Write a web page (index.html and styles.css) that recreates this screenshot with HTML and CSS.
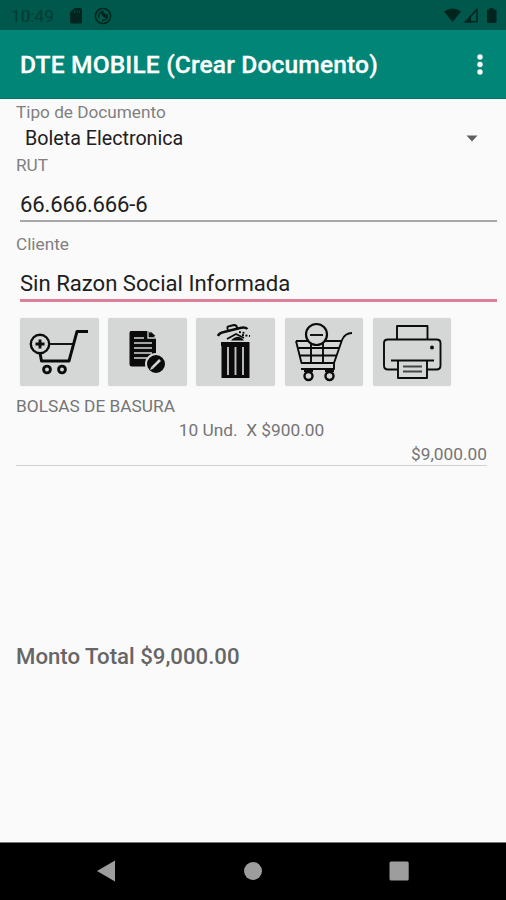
FILE: index.html
```html
<!DOCTYPE html>
<html lang="es">
<head>
<meta charset="utf-8">
<title>DTE MOBILE</title>
<link rel="stylesheet" href="styles.css">
</head>
<body>
<div class="screen">
  <div class="status">
    <span class="clock">10:49</span>
    <svg class="sd" width="12" height="16" viewBox="0 0 12 16"><path d="M4.500 0H10.500Q12 0 12 1.500V14Q12 15.500 10.500 15.500H1.500Q0 15.500 0 14V4.500Z"/><path class="notch" d="M4.500 2.500V5M7 2.500V5M9.500 2.500V5"/></svg>
    <svg class="sync" width="18" height="18" viewBox="0 0 18 18"><circle class="ring" cx="9" cy="9" r="7.600"/><path class="ring" d="M5 11A4.500 4.500 0 0 1 10 4.700M13 7A4.500 4.500 0 0 1 8 13.300"/><path d="M5.500 5.500L9 5 13 8.500 13 11.500 9.500 10 7.500 7.500Z"/></svg>
    <svg class="signals" width="54" height="18" viewBox="0 0 54 18"><path d="M0 4.500Q8.500-1.500 17 4.500L8.500 15Z"/><path class="ring" d="M21.500 14.700L33 2.500V14.700Z"/><path d="M20.500 15.500L27 8.500V15.500Z"/><path d="M45.500 1H49.500V2.500H51Q52.500 2.500 52.500 3.500V15Q52.500 16 51.500 16H44Q43 16 43 15V3.500Q43 2.500 44 2.500H45.500Z"/></svg>
  </div>
  <header class="appbar">
    <h1>DTE MOBILE (Crear Documento)</h1>
    <svg width="8" height="22" viewBox="0 0 8 22"><circle cx="4" cy="4" r="2.700"/><circle cx="4" cy="11.500" r="2.700"/><circle cx="4" cy="19" r="2.700"/></svg>
  </header>
  <main>
    <div class="label tipo">Tipo de Documento</div>
    <div class="spinner"><span>Boleta Electronica</span><svg width="12" height="7" viewBox="0 0 12 7"><path d="M0.500 0.500H11.500L6 6.500Z"/></svg></div>
    <div class="label rut">RUT</div>
    <div class="field"><span class="rutvalue">66.666.666-6</span></div>
    <div class="label cliente">Cliente</div>
    <div class="field active"><span class="name">Sin Razon Social Informada</span></div>
    <div class="tools">
      <button aria-label="Agregar"><svg viewBox="0 0 78 68"><g class="line"><path class="w3" d="M68 13.500H57L49 43H21.500L20 35"/><path class="w2" d="M29 26H53"/><circle class="w25" cx="20" cy="26" r="9.200"/><path class="w3" d="M20 21.500V30.500M15.500 26H24.500"/><circle class="w3" cx="27" cy="51.500" r="3.400"/><circle class="w3" cx="42" cy="51.500" r="3.400"/></g></svg></button>
      <button aria-label="Editar"><svg viewBox="0 0 78 68"><path d="M23 13H40L48 20V46Q48 48.500 45.500 48.500H24Q21.500 48.500 21.500 46V15Q21.500 13 23 13Z"/><path class="cut" d="M40 13V20H48M26 20H36M26 25H44M26 30H44M26 35H44M26 40H40"/><path d="M42.500 13.500L47.500 18H42.500Z"/><circle class="disc" cx="48" cy="46" r="10"/><path class="pen" d="M44.300 49.700L52 42"/><path class="nib" d="M42 52L43.300 48.700 45.300 50.700Z"/></svg></button>
      <button aria-label="Vaciar"><svg viewBox="0 0 78 68"><path d="M25 24H53.500V60H25.500V28H25Z"/><path class="bars" d="M32 29V57M39.500 29V57M47 29V57"/><g class="line"><path class="w25" d="M22 18Q23 15 28 14L44 10Q49 8.500 51.500 11"/><path class="w2" d="M32 12Q30 8 34 8L38 7Q41 7 41 10M31 21L40 16 48 20"/><path class="w2 debris" d="M43 14L49 15M46 17L54 18"/></g><path d="M35 22.500Q42 15 48 22.500Z"/></svg></button>
      <button aria-label="Quitar"><svg viewBox="0 0 78 68"><g class="line"><path class="w2" d="M67 15Q60 15 57 22L49 45V51H16M11 23H56M11 23L16.500 45H49M12.500 30H54M14.500 37.500H52M26 23V45M38 23V45"/><circle class="badge" cx="31.500" cy="16.500" r="10.500"/><path class="w2" d="M25 17H38"/><circle class="w25" cx="23.500" cy="58" r="4"/><circle class="w25" cx="44.500" cy="58" r="4"/><path class="w2" d="M19 53H28M40 53H49"/></g></svg></button>
      <button aria-label="Imprimir"><svg viewBox="0 0 78 68"><g class="line"><path class="w2" d="M24 21V8H54.500V21M24 51.500H15Q11 51.500 11 47.500V25Q11 21.500 15 21.500H63.500Q67.500 21.500 67.500 25V47.500Q67.500 51.500 63.500 51.500H54.500M18 42.500H61M25 42.500V60H54V42.500"/><path class="w2 text" d="M30 48.500H49M30 53.500H49"/></g><circle cx="59" cy="29.500" r="2"/></svg></button>
    </div>
    <div class="item">
      <div class="product">BOLSAS DE BASURA</div>
      <div class="quantity">10 Und.&nbsp; X $900.00</div>
      <div class="amount">$9,000.00</div>
    </div>
    <div class="total">Monto Total $9,000.00</div>
  </main>
  <nav>
    <svg width="18" height="22" viewBox="0 0 18 22"><path d="M0 11L18 0.500V21.500Z"/></svg>
    <svg width="19" height="20" viewBox="0 0 19 20"><circle cx="10" cy="10" r="9"/></svg>
    <svg width="20" height="20" viewBox="0 0 20 20"><rect x="0.500" y="0.500" width="19.200" height="19" rx="1.500"/></svg>
  </nav>
</div>
</body>
</html>
```
FILE: styles.css
```css
* { box-sizing: border-box; }
body { margin: 0; background: #fafafa; font-family: Roboto, "Liberation Sans", sans-serif; }
svg { display: block; flex: none; }
.screen { width: 506px; height: 900px; display: flex; flex-direction: column; overflow: hidden; }
.status { height: 30px; background: #00574b; display: flex; align-items: center; padding: 1px 8px 0 11px; }
.status svg { fill: #00251f; }
.clock { width: 59px; font-size: 17.200px; color: #003b32; line-height: 30px; }
.sd { margin-right: 12px; }
.notch { stroke: #00574b; stroke-width: 0.700; }
.ring { fill: none; stroke: #00251f; stroke-width: 1.500; }
.signals { margin-left: auto; }
.appbar { height: 69px; background: #008577; border-bottom: 1px solid #007266; display: flex; align-items: center; justify-content: space-between; padding: 0 22px 0 20px; }
.appbar h1 { margin: 2px 0 0; font-size: 24.600px; font-weight: 500; letter-spacing: 0.130px; line-height: 30px; color: #fff; white-space: nowrap; -webkit-text-stroke: 0.300px #fff; }
.appbar svg { fill: #fff; }
main { flex: 1; padding: 3px 9px 0 16px; color: #757575; }
.label { font-size: 17.200px; line-height: 20px; color: #808080; }
.spinner { height: 33px; padding: 0 19px 0 9px; display: flex; align-items: center; justify-content: space-between; font-size: 19.700px; color: #202020; }
.spinner svg { fill: #606060; }
.field { height: 47px; margin-left: 4px; padding-top: 16px; border-bottom: 2px solid #a8a8a8; font-size: 22.100px; line-height: 26px; color: #202020; }
.rutvalue { letter-spacing: -0.170px; }
.cliente { margin-top: 12px; }
.active { height: 48px; border-bottom: 3px solid #dc7f98; }
.tools { display: flex; gap: 9.600px; margin: 16px 0 0 4px; }
.tools button { width: 78.600px; height: 68px; padding: 0; border: 0; border-radius: 2px; background: #d5d7d6; box-shadow: 0 0 1px #d5d7d6; }
.tools svg { width: 78px; height: 68px; fill: #0b0b0b; }
.line { fill: none; stroke: #0b0b0b; stroke-linejoin: round; }
.w2 { stroke-width: 1.900; }
.w25 { stroke-width: 2.400; }
.w3 { stroke-width: 2.900; }
.text { stroke: #444; }
.debris { stroke-dasharray: 2 1.500; }
.cut { fill: none; stroke: #d5d7d6; stroke-width: 1.300; }
.disc { stroke: #d5d7d6; stroke-width: 2; }
.pen { stroke: #d5d7d6; stroke-width: 2.600; }
.nib { fill: #d5d7d6; }
.bars { stroke: #bfc1c0; stroke-width: 1.900; }
.badge { fill: #d5d7d6; stroke-width: 2.200; }
.item { margin: 8px 10px 0 0; height: 72px; border-bottom: 1px solid #d2d2d2; font-size: 17.300px; line-height: 24px; }
.quantity { text-align: center; }
.amount { text-align: right; }
.total { margin-top: 176px; font-size: 22.200px; line-height: 28px; font-weight: 500; color: #666; }
nav { height: 58px; flex: none; background: #000; border-top: 1px solid #777; display: flex; justify-content: space-between; align-items: center; padding: 0 97px 2px; }
nav svg { fill: #9d9d9d; }
```
